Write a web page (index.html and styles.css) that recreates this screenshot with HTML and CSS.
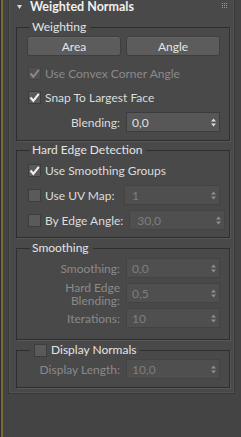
FILE: index.html
```html
<!DOCTYPE html>
<html lang="en">
<head>
    <meta charset="UTF-8">
    <meta name="viewport" content="width=device-width, initial-scale=1.0">
    <title>Weighted Normals</title>
    <link rel="stylesheet" href="styles.css">
</head>

<body>

    <div class="strip">
        <section class="rollout">
            <header class="rollout-head">
                <svg class="arrow" width="5" height="4" viewBox="0 0 5 4"><path d="M0 0H5L2.5 4Z" fill="#d8d8d8"/></svg>
                <h1>Weighted Normals</h1>
                <svg class="grip" width="5" height="5" viewBox="0 0 5 5" fill="#9a9a9a">
                    <rect x="0" y="0" width="1" height="1"/><rect x="2" y="0" width="1" height="1"/><rect x="4" y="0" width="1" height="1"/>
                    <rect x="0" y="2" width="1" height="1"/><rect x="2" y="2" width="1" height="1"/><rect x="4" y="2" width="1" height="1"/>
                    <rect x="0" y="4" width="1" height="1"/><rect x="2" y="4" width="1" height="1"/><rect x="4" y="4" width="1" height="1"/>
                </svg>
            </header>

            <!-- Weighting -->
            <fieldset class="group g-weighting">
                <legend>Weighting</legend>
                <div class="buttons">
                    <button class="btn">Area</button>
                    <button class="btn">Angle</button>
                </div>
                <label class="check disabled r-convex"><span class="box on"></span>Use Convex Corner Angle</label>
                <label class="check r-snap"><span class="box on"></span>Snap To Largest Face</label>
                <div class="row r-blend">
                    <span class="label">Blending:</span>
                    <span class="field"><span class="value">0,0</span><span class="spin"></span></span>
                </div>
            </fieldset>

            <!-- Hard Edge Detection -->
            <fieldset class="group g-hard">
                <legend>Hard Edge Detection</legend>
                <label class="check r-groups"><span class="box on"></span>Use Smoothing Groups</label>
                <div class="row r-uv">
                    <label class="check"><span class="box"></span>Use UV Map:</label>
                    <span class="field wide disabled"><span class="value">1</span><span class="spin"></span></span>
                </div>
                <div class="row r-angle">
                    <label class="check"><span class="box"></span>By Edge Angle:</label>
                    <span class="field wide disabled"><span class="value">30,0</span><span class="spin"></span></span>
                </div>
            </fieldset>

            <!-- Smoothing -->
            <fieldset class="group g-smooth">
                <legend>Smoothing</legend>
                <div class="row r-smooth">
                    <span class="label disabled">Smoothing:</span>
                    <span class="field disabled"><span class="value">0,0</span><span class="spin"></span></span>
                </div>
                <div class="row r-heb">
                    <span class="label disabled two"><span class="line">Hard Edge</span><span class="line">Blending:</span></span>
                    <span class="field disabled"><span class="value">0,5</span><span class="spin"></span></span>
                </div>
                <div class="row r-iter">
                    <span class="label disabled">Iterations:</span>
                    <span class="field disabled"><span class="value">10</span><span class="spin"></span></span>
                </div>
            </fieldset>

            <!-- Display -->
            <fieldset class="group g-display">
                <legend class="legend-check"><label class="check"><span class="box"></span>Display Normals</label></legend>
                <div class="row r-length">
                    <span class="label disabled">Display Length:</span>
                    <span class="field disabled"><span class="value">10,0</span><span class="spin"></span></span>
                </div>
            </fieldset>
        </section>
    </div>

</body>

</html>
```

FILE: styles.css
```css
/* 3ds Max style rollout */
html, body {
    margin: 0;
    height: 100%;
}

body {
    background-color: #2c2c2c;
    font-family: "Lato", "Liberation Sans", sans-serif;
    font-size: 12px;
    color: #dcdcdc;
}

.strip {
    margin-left: 1px;
    min-height: 437px;
    border-left: 2px solid #7b6b39;
    background-color: #444444;
    padding-left: 5px;
}

.rollout {
    width: 227px;
    box-sizing: border-box;
    background-color: #494949;
    border: 1px solid #383838;
    border-top: none;
    box-shadow: inset 1px 0 0 #525252, inset -1px -1px 0 #525252;
    padding: 0 4px 5px 7px;
}

.rollout-head {
    display: flex;
    align-items: center;
    height: 14px;
}

.rollout-head h1 {
    margin: 0;
    font-size: 12.5px;
    font-weight: bold;
    color: #f0f0f0;
    line-height: 14px;
    flex: 1;
}

.arrow {
    margin: 0 8px 0 1px;
}

.grip {
    margin-right: 3px;
    align-self: flex-start;
    margin-top: 3px;
}

/* group boxes */
.group {
    margin: 0;
    padding: 0 9px 8px 10px;
    border: 1px solid #2e2e2e;
    box-shadow: 1px 1px 0 #575757;
    min-inline-size: 0;
    width: 214px;
    box-sizing: border-box;
}

.group legend {
    margin-left: 3px;
    padding: 0 4px 0 2px;
    line-height: 14px;
    color: #e4e4e4;
}

.g-weighting { margin-top: 6px; }
.g-hard { margin-top: 2px; padding-bottom: 7px; }
.g-smooth { margin-top: 3px; padding-bottom: 11px; }
.g-display { margin-top: 3px; }

.buttons {
    display: grid;
    grid-template-columns: 1fr 1fr;
    gap: 5px;
    margin-top: 2px;
}

.btn {
    height: 20px;
    padding: 0;
    font-family: inherit;
    font-size: 12px;
    color: #e6e6e6;
    background-color: #5c5c5c;
    border: 1px solid #3e3e3e;
    border-radius: 3px;
    box-shadow: inset 0 1px 0 #666666;
}

/* checkboxes */
.check {
    display: flex;
    align-items: center;
    height: 18px;
    padding-left: 1px;
    white-space: nowrap;
}

.box {
    width: 13px;
    height: 13px;
    box-sizing: border-box;
    margin-right: 4px;
    background-color: #5a5a5a;
    border: 1px solid #3d3d3d;
    flex: none;
}

.box.on {
    background-image: url("data:image/svg+xml,%3Csvg xmlns='http://www.w3.org/2000/svg' width='11' height='11'%3E%3Cpath d='M1.5 5.5L4.3 8.8L9.8 1.8' fill='none' stroke='%23f2f2f2' stroke-width='2.1'/%3E%3C/svg%3E");
    background-repeat: no-repeat;
}

.check.disabled {
    color: #8a8a8a;
}

.check.disabled .box {
    background-color: #505050;
    border-color: #444444;
}

.check.disabled .box.on {
    background-image: url("data:image/svg+xml,%3Csvg xmlns='http://www.w3.org/2000/svg' width='11' height='11'%3E%3Cpath d='M1.5 5.5L4.3 8.8L9.8 1.8' fill='none' stroke='%23878787' stroke-width='2.1'/%3E%3C/svg%3E");
}

.r-convex { margin-top: 8px; }
.r-snap { margin-top: 6px; }
.r-groups { margin-top: 4px; }

/* spinner rows */
.row {
    display: flex;
    align-items: center;
    gap: 6px;
}

.row .check {
    flex: 1;
}

.label {
    flex: 1;
    text-align: right;
}

.label.disabled {
    color: #8a8a8a;
}

.label.two {
    display: flex;
    flex-direction: column;
    align-items: flex-end;
    margin-top: -1px;
}

.label.two .line {
    display: block;
    height: 12px;
    line-height: 12px;
}

.label.two .line + .line {
    margin-top: 1px;
}

.r-blend { margin-top: 6px; }
.r-uv { margin-top: 6px; }
.r-angle { margin-top: 5px; }
.r-smooth { margin-top: 3px; }
.r-heb { margin-top: 5px; align-items: flex-start; }
.r-iter { margin-top: 1px; }
.r-length { margin-top: 2px; }

.field {
    display: flex;
    align-items: center;
    width: 94px;
    height: 20px;
    box-sizing: border-box;
    padding: 0 3px 0 5px;
    background-color: #575757;
    border: 1px solid #3c3c3c;
    color: #e0e0e0;
    flex: none;
}

.field.wide {
    width: 96px;
    padding-left: 7px;
}

.field.disabled {
    background-color: #4f4f4f;
    border-color: #434343;
    color: #7e7e7e;
}

.value {
    flex: 1;
}

.spin {
    width: 5px;
    height: 9px;
    background-image: url("data:image/svg+xml,%3Csvg xmlns='http://www.w3.org/2000/svg' width='5' height='9'%3E%3Cpath d='M0 3.5L2.5 0.5L5 3.5ZM0 5.5L2.5 8.5L5 5.5Z' fill='%23dcdcdc'/%3E%3C/svg%3E");
}

.field.disabled .spin {
    opacity: 0.45;
}

/* legend holding a checkbox */
.legend-check {
    padding-left: 4px !important;
}

.legend-check .check {
    height: 14px;
    padding-left: 0;
}
```
